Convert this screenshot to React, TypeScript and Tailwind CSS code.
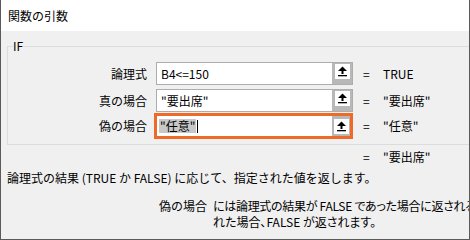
import React from "react";

const F = "font-['Noto_Sans_CJK_JP',sans-serif]";

function ArrowIcon() {
  return (
    <svg width="15" height="15" viewBox="0 0 15 15">
      <path d="M7.5 2.5 L12 7 L3 7 Z" fill="#000" />
      <rect x="6.5" y="6.5" width="2" height="3.5" fill="#000" />
      <rect x="3" y="11" width="9" height="1.3" fill="#000" />
    </svg>
  );
}

function RefButton({ orange }: { orange?: boolean }) {
  return (
    <div
      className={
        orange
          ? "w-[18px] self-stretch bg-[#b8b8b8] pl-[2px] pt-[3px]"
          : "w-[20px] self-stretch bg-[#b8b8b8] pl-[3px] pt-[1px]"
      }
    >
      <div className="w-[15px] h-[15px] bg-white">
        <ArrowIcon />
      </div>
    </div>
  );
}

function Row({
  label,
  value,
  result,
  className,
}: {
  label: string;
  value: string;
  result: string;
  className?: string;
}) {
  return (
    <div className={`flex items-center h-[23px] ${className ?? ""}`}>
      <div className="w-[139px] text-right leading-[16px]">{label}</div>
      <div className="ml-[9px] w-[197px] h-[23px] border border-[#adadad] bg-white flex">
        <div className="flex-1 pl-[4px] flex items-center leading-[16px]">{value}</div>
        <RefButton />
      </div>
      <div className="ml-[10px] w-[20px] leading-[16px]">=</div>
      <div className="leading-[16px] whitespace-nowrap">{result}</div>
    </div>
  );
}

export default function App() {
  return (
    <div
      className={`w-[470px] h-[240px] overflow-hidden bg-[#f0f0f0] border-x border-b border-[#5a5a5a] text-black text-[12px] ${F} flex flex-col`}
    >
      <div className="h-[31px] shrink-0 bg-white flex items-center pl-[7px] leading-[16px]">
        関数の引数
      </div>

      <div className="relative shrink-0 mt-[15px] ml-[6px] mr-[-20px] border border-[#dcdcdc] pt-[15px] pb-[5px] flex flex-col">
        <span className="absolute left-[5px] top-[-9px] bg-[#f0f0f0] leading-[16px]">IF</span>

        <Row label="論理式" value="B4<=150" result="TRUE" />
        <Row label="真の場合" value={'"要出席"'} result={'"要出席"'} className="mt-[4px]" />

        <div className="flex items-center h-[26px] mt-[1px]">
          <div className="w-[139px] text-right leading-[16px]">偽の場合</div>
          <div className="ml-[7px] w-[199px] h-[26px] border-[3px] border-[#ee6a26] bg-white flex">
            <div className="flex-1 pl-[2px] flex items-center">
              <span className="bg-[#c8c8c8] leading-[14px] px-[1px]">"任意"</span>
              <span className="ml-[1px] w-[1px] h-[13px] bg-black" />
            </div>
            <RefButton orange />
          </div>
          <div className="ml-[10px] w-[20px] leading-[16px]">=</div>
          <div className="leading-[16px] whitespace-nowrap">"任意"</div>
        </div>
      </div>

      <div className="flex mt-[4px] pl-[362px] leading-[16px] whitespace-nowrap">
        <span className="w-[20px]">=</span>
        <span>"要出席"</span>
      </div>

      <div className="mt-[5px] pl-[6px] leading-[16px] whitespace-nowrap">
        論理式の結果 (TRUE か FALSE) に応じて、指定された値を返します。
      </div>

      <div className="mt-[12px] flex pl-[158px] leading-[16px]">
        <div className="w-[54px] shrink-0 whitespace-nowrap">偽の場合</div>
        <div className="flex flex-col whitespace-nowrap [font-feature-settings:'palt']">
          <span className="tracking-[-0.3px]">には論理式の結果が FALSE であった場合に返される値を指定します。省略さ</span>
          <span>れた場合、FALSE が返されます。</span>
        </div>
      </div>
    </div>
  );
}
